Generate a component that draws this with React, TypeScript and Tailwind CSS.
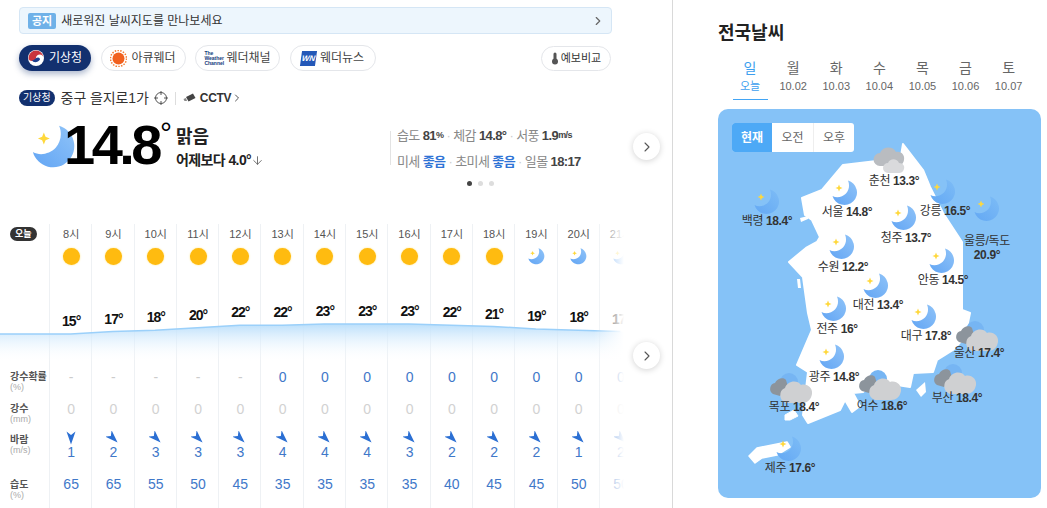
import React from 'react';
import { ChevronRight, ArrowDown } from 'lucide-react';

const hours = [
  { h: '8시', t: 15, p: '-', w: 1, d: 0, m: 65, i: 'sun' },
  { h: '9시', t: 17, p: '-', w: 2, d: -45, m: 65, i: 'sun' },
  { h: '10시', t: 18, p: '-', w: 3, d: -45, m: 55, i: 'sun' },
  { h: '11시', t: 20, p: '-', w: 3, d: -45, m: 50, i: 'sun' },
  { h: '12시', t: 22, p: '-', w: 3, d: -45, m: 45, i: 'sun' },
  { h: '13시', t: 22, p: '0', w: 4, d: -45, m: 35, i: 'sun' },
  { h: '14시', t: 23, p: '0', w: 4, d: -45, m: 35, i: 'sun' },
  { h: '15시', t: 23, p: '0', w: 4, d: -45, m: 35, i: 'sun' },
  { h: '16시', t: 23, p: '0', w: 3, d: -45, m: 35, i: 'sun' },
  { h: '17시', t: 22, p: '0', w: 2, d: -45, m: 40, i: 'sun' },
  { h: '18시', t: 21, p: '0', w: 2, d: -45, m: 45, i: 'sun' },
  { h: '19시', t: 19, p: '0', w: 2, d: -45, m: 45, i: 'moon' },
  { h: '20시', t: 18, p: '0', w: 1, d: -45, m: 50, i: 'moon' },
  { h: '21시', t: 17, p: '0', w: 2, d: -45, m: 50, i: 'moon' },
];

const days = [
  ['일', '오늘'],
  ['월', '10.02'],
  ['화', '10.03'],
  ['수', '10.04'],
  ['목', '10.05'],
  ['금', '10.06'],
  ['토', '10.07'],
];

// 지도 위 좌표 (패널 기준으로 변환)
const cities = [
  { n: '서울', v: '14.8°', x: 845, y: 193, lx: 847, ly: 212, k: 'moon' },
  { n: '백령', v: '18.4°', x: 767, y: 202, lx: 767, ly: 221, k: 'sea' },
  { n: '춘천', v: '13.3°', x: 890, y: 160, lx: 894, ly: 181, k: 'cloud' },
  { n: '강릉', v: '16.5°', x: 943, y: 192, lx: 945, ly: 211, k: 'sea' },
  { n: '청주', v: '13.7°', x: 904, y: 218, lx: 906, ly: 238, k: 'moon' },
  { n: '수원', v: '12.2°', x: 842, y: 247, lx: 843, ly: 267, k: 'moon' },
  { n: '안동', v: '14.5°', x: 942, y: 261, lx: 943, ly: 280, k: 'moon' },
  { n: '대전', v: '13.4°', x: 876, y: 286, lx: 878, ly: 305, k: 'moon' },
  { n: '전주', v: '16°', x: 834, y: 309, lx: 837, ly: 329, k: 'moon' },
  { n: '대구', v: '17.8°', x: 924, y: 317, lx: 926, ly: 336, k: 'moon' },
  { n: '울산', v: '17.4°', x: 978, y: 338, lx: 979, ly: 353, k: 'night' },
  { n: '광주', v: '14.8°', x: 832, y: 357, lx: 834, ly: 377, k: 'moon' },
  { n: '목포', v: '18.4°', x: 792, y: 390, lx: 794, ly: 407, k: 'night' },
  { n: '여수', v: '18.6°', x: 881, y: 387, lx: 882, ly: 406, k: 'night' },
  { n: '부산', v: '18.4°', x: 956, y: 381, lx: 957, ly: 398, k: 'night' },
  { n: '제주', v: '17.6°', x: 789, y: 449, lx: 790, ly: 468, k: 'sea' },
];

const korea =
  '903,144 923,170 930,187 943,213 962,242 962,310 970,313 965,337 953,350 937,360 933,372 913,373 910,387 897,385 887,380 880,373 863,392 853,393 860,406 852,412 845,400 840,410 808,423 803,415 808,372 797,365 812,330 808,313 803,277 789,262 806,248 817,242 820,237 812,220 805,215 802,198 822,190 843,165 885,160 900,162';

const tempY = (t: number) => 321 - (t - 15) * 1.25;
const lineY = (t: number) => 334 - (t - 15) * 1.25;
const colX = (i: number) => 70.5 + i * 42.3;
const linePts = hours.map((h, i) => `${colX(i)},${lineY(h.t)}`).join(' L');

const Moon = ({ size, fill = 'url(#moonG)' }: { size: number; fill?: string }) => (
  <svg width={size} height={size} viewBox="0 0 26 26" className="block">
    <path d="M16 0.5A12.5 12.5 0 1 1 0.5 16C5 18.500 10.500 17 14 13.500C17 10 18 5 16 0.500Z" fill={fill} />
    <path d="M7 4.500L8 7L10.500 8L8 9L7 11.500L6 9L3.500 8L6 7Z" fill="#ffd83b" />
  </svg>
);

const NightCloud = () => (
  <svg width="46" height="36" viewBox="0 0 46 36" className="block">
    <circle cx="20" cy="10" r="9" fill="#76b5f3" />
    <path d="M4 22a6 6 0 0 1 2-11c2-5 9-6 11-3l3 10-9 6z" fill="#8c949c" />
    <path d="M17 31a8 8 0 0 1-1-15c2-7 12-9 16-3 6-2 12 3 11 9-1 6-5 9-10 9z" fill="#cfd0d2" />
  </svg>
);

const GrayCloud = () => (
  <svg width="34" height="28" viewBox="0 0 34 28" className="block">
    <path d="M7 20a6.500 6.500 0 0 1 0-13c3-7 13-7 16-1 6-1 9 4 8 8-1 5-4 6-7 6z" fill="#b9bcc0" />
    <path d="M15 27a5 5 0 0 1 0-10c2-5 9-5 11 0 4 0 6 3 5 6-1 3-3 4-5 4z" fill="#d9dadc" />
  </svg>
);

const Arrow = ({ d }: { d: number }) => (
  <svg width="14" height="14" viewBox="-7 -7 14 14" className="block">
    <path d="M-4.500 -6.500L0 -3L4.500 -6.500L0 6.500Z" fill="#2b6fd3" transform={`rotate(${d})`} />
  </svg>
);

const RoundNext = () => (
  <button className="flex h-[27px] w-[27px] items-center justify-center rounded-full bg-white shadow-[0_1px_6px_rgba(0,0,0,0.18)]">
    <ChevronRight size={16} strokeWidth={1.6} className="text-[#555]" />
  </button>
);

const Chip = ({ icon, label, w }: { icon: React.ReactNode; label: string; w: string }) => (
  <div className={`flex h-[26px] items-center justify-center gap-[4px] rounded-full border border-[#e4e6ea] bg-white text-[12px] text-[#444] ${w}`}>
    {icon}
    <span>{label}</span>
  </div>
);

const RowLabel = ({ a, b, cls }: { a: string; b: string; cls: string }) => (
  <div className={`pl-[10px] leading-[11px] ${cls}`}>
    <div className="text-[10px] font-bold text-[#555]">{a}</div>
    <div className="text-[9px] text-[#aaa]">{b}</div>
  </div>
);

const Dot = () => <span className="mx-[3px] text-[#ccc]">·</span>;

export default function App() {
  return (
    <div className="flex h-[508px] w-[1047px] overflow-hidden bg-white font-['Liberation_Sans','Noto_Sans_CJK_KR',sans-serif] text-[#222]">
      <svg width="0" height="0" className="absolute">
        <defs>
          <linearGradient id="moonG" x1="0" y1="1" x2="1" y2="0">
            <stop offset="0" stopColor="#62a5f4" />
            <stop offset="1" stopColor="#8fc3f8" />
          </linearGradient>
          <linearGradient id="moonS" x1="0" y1="1" x2="1" y2="0">
            <stop offset="0" stopColor="#63a8f4" />
            <stop offset="1" stopColor="#7dbcf6" />
          </linearGradient>
          <linearGradient id="waveG" x1="0" y1="0" x2="0" y2="1">
            <stop offset="0" stopColor="#bbdffb" />
            <stop offset="1" stopColor="#ffffff" stopOpacity="0" />
          </linearGradient>
        </defs>
      </svg>

      {/* 왼쪽 */}
      <div className="relative h-full w-[673px] shrink-0 overflow-hidden border-r border-[#d9d9d9]">
        <div className="px-[19px] pt-[7px]">
          <div className="flex h-[27px] w-[593px] items-center rounded-[4px] border border-[#d5e6f5] bg-[#edf6fd] pl-[8px] pr-[6px]">
            <span className="rounded-[2px] bg-[#6fb1e8] px-[4px] text-[11px] font-bold leading-[16px] text-white">공지</span>
            <span className="ml-[5px] flex-1 text-[12px] text-[#333]">새로워진 날씨지도를 만나보세요</span>
            <ChevronRight size={14} className="text-[#666]" />
          </div>

          <div className="mt-[11px] flex w-[592px] items-center gap-[9.500px]">
            <div className="flex h-[26px] w-[72px] items-center justify-center gap-[5px] rounded-full bg-[#12306f] text-[12px] text-white shadow-[0_3px_6px_rgba(18,48,111,0.35)]">
              <svg width="16" height="16" viewBox="0 0 16 16">
                <circle cx="8" cy="8" r="8" fill="#fff" />
                <path d="M0.500 8a7.500 7.500 0 0 1 15 0c0-2-1.700-3.500-3.700-3.500S8 6 8 8 6 11 4 11 0.500 10 0.500 8z" fill="#c9353d" />
                <path d="M4 10.500c3 0 3-3 6-3 1.500 0 2 1 2 2-1 2-4 3-6 2.500-1-.3-1.500-1-2-1.500z" fill="#1d3f8f" />
              </svg>
              <span>기상청</span>
            </div>
            <Chip
              w="w-[85px]"
              label="아큐웨더"
              icon={
                <svg width="17" height="17" viewBox="0 0 17 17">
                  <circle cx="8.500" cy="8.500" r="8" fill="none" stroke="#f47a30" strokeWidth="1.500" strokeDasharray="1.500 1.300" />
                  <circle cx="8.500" cy="8.500" r="6" fill="#f1611f" />
                </svg>
              }
            />
            <Chip
              w="w-[85px]"
              label="웨더채널"
              icon={
                <span className="w-[18px] text-[5px] font-bold leading-[5px] text-[#123a7a]">The Weather Channel</span>
              }
            />
            <Chip
              w="w-[86px]"
              label="웨더뉴스"
              icon={
                <span className="flex h-[15px] w-[15px] skew-x-[-8deg] items-center justify-center bg-[#2458b8] text-[8px] font-bold italic text-white">WN</span>
              }
            />
            <div className="ml-auto flex h-[25px] w-[70px] items-center justify-center gap-[2px] rounded-full border border-[#e4e6ea] text-[11px] text-[#333]">
              <svg width="8" height="13" viewBox="0 0 8 13">
                <rect x="2.500" y="0.500" width="3" height="8" rx="1.500" fill="#555" />
                <circle cx="4" cy="9.500" r="3" fill="#555" />
              </svg>
              <span>예보비교</span>
            </div>
          </div>

          <div className="mt-[18px] flex h-[18px] items-center">
            <span className="rounded-full bg-[#12306f] px-[4px] text-[10px] leading-[16px] text-white">기상청</span>
            <span className="ml-[6px] text-[14px] tracking-[-0.1px] text-[#333]">중구 을지로1가</span>
            <svg width="14" height="14" viewBox="0 0 14 14" className="ml-[5px]" fill="none" stroke="#555" strokeWidth="1">
              <circle cx="7" cy="7" r="5.500" />
              <path d="M7 0v4M7 10v4M0 7h4M10 7h4" />
            </svg>
            <span className="mx-[7px] h-[13px] w-px bg-[#ddd]" />
            <svg width="13" height="11" viewBox="0 0 13 11">
              <path d="M3 4L10 0.500L12.500 5L5.500 8.500Z" fill="#444" />
              <path d="M0.500 6L3 5L4 8H1.500Z" fill="#888" />
            </svg>
            <span className="ml-[4px] text-[12px] font-bold tracking-[-0.3px] text-[#333]">CCTV</span>
            <ChevronRight size={12} className="text-[#555]" />
          </div>

          {/* 현재 날씨 */}
          <div className="mt-[13px] flex h-[60px] items-start">
            <div className="ml-[13px] mt-[5px] shrink-0">
              <Moon size={44} />
            </div>
            <div className="relative -ml-[12px] mt-[-7px] text-[56px] font-bold leading-[64px] tracking-[-3.500px] text-black">14.8</div>
            <div className="ml-[1px] mt-[-2px] text-[30px] leading-[30px] text-black">°</div>
            <div className="ml-[4px] mt-[5px]">
              <div className="text-[18px] font-bold leading-[24px]">맑음</div>
              <div className="mt-[2px] flex items-center text-[14px] font-bold leading-[18px] tracking-[-0.600px]">
                어제보다 4.0°
                <ArrowDown size={13} strokeWidth={1.5} className="text-[#555]" />
              </div>
            </div>
            <div className="absolute left-[390px] top-[131px] h-[34px] w-[199px] border-l border-[#e3e3e3] pl-[6px] text-[13px] tracking-[-0.6px] text-[#888]">
              <div className="-mt-[5px] flex h-[20px] items-center whitespace-nowrap">
                습도&nbsp;<b className="text-[#444]">81</b><b className="text-[9px] text-[#444]">%</b>
                <Dot />체감&nbsp;<b className="text-[#444]">14.8°</b>
                <Dot />서풍&nbsp;<b className="text-[#444]">1.9</b><b className="text-[9px] text-[#444]">m/s</b>
              </div>
              <div className="mt-[6px] flex h-[20px] items-center whitespace-nowrap">
                미세&nbsp;<b className="text-[#2f74d6]">좋음</b>
                <Dot />초미세&nbsp;<b className="text-[#2f74d6]">좋음</b>
                <Dot />일몰&nbsp;<b className="text-[#444]">18:17</b>
              </div>
            </div>
          </div>
          <div className="absolute left-[633px] top-[133px]">
            <RoundNext />
          </div>
          <div className="absolute left-[467px] top-[181px] flex gap-[6px]">
            <span className="h-[5px] w-[5px] rounded-full bg-[#444]" />
            <span className="h-[5px] w-[5px] rounded-full bg-[#ddd]" />
            <span className="h-[5px] w-[5px] rounded-full bg-[#ddd]" />
          </div>
        </div>

        {/* 시간별 */}
        <div className="absolute left-0 top-[224px] flex h-[284px]">
          <div className="relative w-[49px] shrink-0">
            <span className="absolute left-[10px] top-[3px] rounded-full bg-[#333] px-[5px] text-[9px] font-bold leading-[14px] text-white">오늘</span>
            <RowLabel a="강수확률" b="(%)" cls="absolute top-[147px] whitespace-nowrap" />
            <RowLabel a="강수" b="(mm)" cls="absolute top-[179px]" />
            <RowLabel a="바람" b="(m/s)" cls="absolute top-[210px]" />
            <RowLabel a="습도" b="(%)" cls="absolute top-[255px]" />
          </div>
          {hours.map((h) => (
            <div key={h.h} className="relative w-[42.3px] shrink-0 border-l border-[#eef1f4] pl-[1px] text-center">
              <div className="mt-[3px] text-[11px] leading-[14px] text-[#555]">{h.h}</div>
              <div className="mt-[7px] flex h-[18px] justify-center">
                {h.i === 'sun' ? (
                  <span className="h-[17px] w-[17px] rounded-full bg-[#ffbb10] shadow-[0_0_2px_#ffe27a]" />
                ) : (
                  <Moon size={17} />
                )}
              </div>
              <div
                className="absolute inset-x-0 pl-[1px] text-[14px] font-bold leading-[16px] tracking-[-1px] text-[#111]"
                style={{ top: tempY(h.t) - 224 - 8 }}
              >
                {h.t}°
              </div>
              <div className="absolute inset-x-0 top-[144px] pl-[1px] text-[14px] leading-[18px] text-[#3f78c9]">
                {h.p === '-' ? <span className="text-[#ccc]">-</span> : h.p}
              </div>
              <div className="absolute inset-x-0 top-[176px] pl-[1px] text-[14px] leading-[18px] text-[#d2d2d2]">0</div>
              <div className="absolute inset-x-0 top-[207px] flex justify-center pl-[1px]">
                <Arrow d={h.d} />
              </div>
              <div className="absolute inset-x-0 top-[219px] pl-[1px] text-[14px] leading-[18px] text-[#3f78c9]">{h.w}</div>
              <div className="absolute inset-x-0 top-[251px] pl-[1px] text-[14px] leading-[18px] text-[#3f78c9]">{h.m}</div>
            </div>
          ))}
        </div>

        {/* 기온 곡선 */}
        <svg width="673" height="60" viewBox="0 310 673 60" className="pointer-events-none absolute left-0 top-[310px]">
          <path d={`M0,334 L${linePts} L673,335 V362 H0 Z`} fill="url(#waveG)" />
          <path d={`M0,334 L${linePts}`} fill="none" stroke="#9bd0fa" strokeWidth="1.500" />
        </svg>

        {/* 오른쪽 페이드 */}
        <div className="pointer-events-none absolute left-[594px] top-[224px] h-[284px] w-[30px] bg-gradient-to-r from-white/0 to-white" />
        <div className="pointer-events-none absolute left-[624px] top-[224px] h-[284px] w-[48px] bg-white" />
        <div className="absolute left-[633px] top-[342px]">
          <RoundNext />
        </div>
      </div>

      {/* 오른쪽 */}
      <div className="flex-1 pl-[45px] pr-[6px] pt-[21px]">
        <h2 className="text-[18px] font-bold leading-[24px] text-[#222]">전국날씨</h2>
        <div className="ml-[10.500px] mt-[9px] flex">
          {days.map(([d, s], i) => (
            <div key={d} className={`relative h-[46px] w-[43.100px] pt-[4px] text-center ${i === 0 ? 'text-[#3d9fef]' : 'text-[#666]'}`}>
              <div className="text-[14px] leading-[20px]">{d}</div>
              <div className="mt-[1px] text-[11px] leading-[15px]">{s}</div>
              {i === 0 && <span className="absolute bottom-0 left-[4px] h-px w-[35px] bg-[#42a5f5]" />}
            </div>
          ))}
        </div>

        <div className="relative mt-[9px] h-[389px] w-[323px] overflow-hidden rounded-[10px] bg-[#85c2f7]">
          <svg width="323" height="389" viewBox="718 109 323 389" className="absolute inset-0">
            <polygon points={korea} fill="#fff" strokeLinejoin="round" stroke="#fff" strokeWidth="2" />
            <polygon points="749,456 757,448 787,442 790,447 777,455 762,458 755,463" fill="#fff" stroke="#fff" strokeWidth="1.500" strokeLinejoin="round" />
            <polygon points="785,415 794,410 798,416 790,420 785,420" fill="#fff" stroke="#fff" strokeLinejoin="round" />
            <polygon points="916,390 925,382 926,392 921,397" fill="#fff" />
            <polygon points="800,218 808,216 808,219 801,222" fill="#fff" />
            <polygon points="797,279 800,279 801,288 798,288" fill="#fff" />
          </svg>

          <div className="absolute left-[14px] top-[14px] flex h-[29px] w-[122px] overflow-hidden rounded-[3px] bg-white text-[12px] text-[#666]">
            <div className="flex w-[40px] items-center justify-center bg-[#4da9f6] font-bold text-white">현재</div>
            <div className="flex w-[42px] items-center justify-center border-r border-[#eee]">오전</div>
            <div className="flex w-[40px] items-center justify-center">오후</div>
          </div>

          {cities.map((c) => (
            <div key={c.n} className="absolute -translate-x-1/2 -translate-y-1/2" style={{ left: c.x - 718, top: c.y - 109 }}>
              {c.k === 'moon' && <Moon size={26} />}
              {c.k === 'sea' && <Moon size={26} fill="url(#moonS)" />}
              {c.k === 'cloud' && <GrayCloud />}
              {c.k === 'night' && <NightCloud />}
            </div>
          ))}

          {cities.map((c) => (
            <div
              key={`${c.n}-label`}
              className="absolute -translate-x-1/2 -translate-y-1/2 whitespace-nowrap text-[12px] leading-[14px] tracking-[-0.4px] text-[#333]"
              style={{ left: c.lx - 718, top: c.ly - 109 }}
            >
              {c.n} <b>{c.v}</b>
            </div>
          ))}

          <div className="absolute left-[269px] top-[125px] -translate-x-1/2 text-center text-[12px] leading-[14px] tracking-[-0.3px] text-[#333]">
            <div className="whitespace-nowrap">울릉/독도</div>
            <b>20.9°</b>
          </div>
          <div className="absolute left-[269px] top-[113px] -translate-x-1/2 -translate-y-full">
            <Moon size={26} fill="url(#moonS)" />
          </div>
        </div>
      </div>
    </div>
  );
}
